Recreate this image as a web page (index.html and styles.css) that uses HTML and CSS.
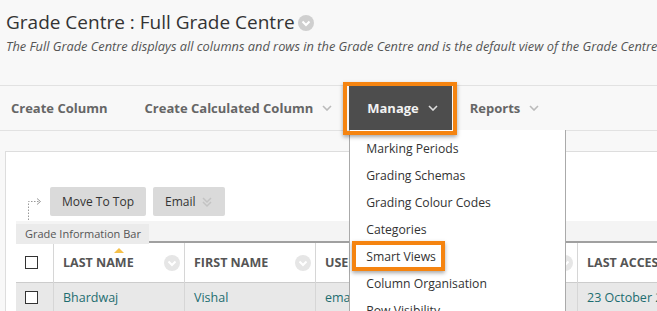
FILE: index.html
```html
<!DOCTYPE html>
<html lang="en">
<head>
    <meta charset="UTF-8">
    <title>Full Grade Centre</title>
    <link rel="stylesheet" href="styles.css">
</head>
<body>
    <div class="page-head">
        <h1>Grade Centre : Full Grade Centre
            <span class="round-chev title-chev"><svg viewBox="0 0 16 16"><path d="M4.5 6.5 8 10l3.5-3.5" /></svg></span>
        </h1>
        <p class="subtitle">The Full Grade Centre displays all columns and rows in the Grade Centre and is the default view of the Grade Centre.</p>
    </div>

    <nav class="actionbar">
        <div class="nav-item first">Create Column</div>
        <div class="nav-item calc">Create Calculated Column <svg class="chev" viewBox="0 0 10 6"><path d="M1 1l4 4 4-4" /></svg></div>
        <div class="nav-item active">Manage <svg class="chev" viewBox="0 0 10 6"><path d="M1 1l4 4 4-4" /></svg>
            <span class="callout callout-manage"></span>
            <ul class="dropdown">
                <li>Marking Periods</li>
                <li>Grading Schemas</li>
                <li>Grading Colour Codes</li>
                <li>Categories</li>
                <li class="highlighted">Smart Views <span class="callout callout-item"></span></li>
                <li>Column Organisation</li>
                <li>Row Visibility</li>
            </ul>
        </div>
        <div class="nav-item">Reports <svg class="chev" viewBox="0 0 10 6"><path d="M1 1l4 4 4-4" /></svg></div>
    </nav>

    <div class="panel">
        <div class="toolbar">
            <svg class="move-arrow" viewBox="0 0 20 24"><path d="M2.5 23V4.5H14" /><path d="M11 1.5l3.5 3-3.5 3" /></svg>
            <button class="tbtn">Move To Top</button>
            <button class="tbtn">Email <svg class="dbl-chev" viewBox="0 0 12 12"><path d="M2 2l4 4 4-4M2 6l4 4 4-4" /></svg></button>
        </div>
        <div class="infobar"><span class="infotab">Grade Information Bar</span></div>
        <table class="grid">
            <tr class="head">
                <th class="cb"><span class="box"></span></th>
                <th class="c-last"><span class="sort-arrow"></span>LAST NAME<span class="round-chev col-chev"><svg viewBox="0 0 16 16"><path d="M4.5 6.5 8 10l3.5-3.5" /></svg></span></th>
                <th class="c-first">FIRST NAME<span class="round-chev col-chev"><svg viewBox="0 0 16 16"><path d="M4.5 6.5 8 10l3.5-3.5" /></svg></span></th>
                <th class="c-user">USERNAME<span class="round-chev col-chev"><svg viewBox="0 0 16 16"><path d="M4.5 6.5 8 10l3.5-3.5" /></svg></span></th>
                <th class="c-access">LAST ACCESSED</th>
            </tr>
            <tr class="row">
                <td class="cb"><span class="box"></span></td>
                <td>Bhardwaj</td>
                <td>Vishal</td>
                <td>email@example.com</td>
                <td>23 October 2017</td>
            </tr>
        </table>
    </div>
</body>
</html>
```

FILE: styles.css
```css
html, body {
    margin: 0;
    padding: 0;
    overflow: hidden;
}

body {
    font-family: 'Open Sans', 'Noto Sans', sans-serif;
    background-color: #f8f8f8;
    color: #333;
    width: 657px;
    height: 311px;
}

/* page title */
.page-head {
    padding: 8px 0 0 6px;
    height: 85px;
    box-sizing: border-box;
}

h1 {
    margin: 0;
    font-size: 19px;
    font-weight: normal;
    line-height: 28px;
    color: #333;
    white-space: nowrap;
    display: flex;
    align-items: center;
}

.subtitle {
    margin: 2px 0 0 0;
    font-size: 12.8px;
    line-height: 17px;
    font-style: italic;
    color: #555;
    white-space: nowrap;
}

.round-chev {
    display: inline-flex;
    width: 16px;
    height: 16px;
    border-radius: 50%;
    background-color: #cfcfcf;
}

.round-chev svg {
    width: 16px;
    height: 16px;
    fill: none;
    stroke: #fff;
    stroke-width: 2;
}

.title-chev {
    margin-left: 3px;
    margin-top: 2px;
}

/* action bar */
.actionbar {
    display: flex;
    height: 44px;
    border-top: 1px solid #e2e2e2;
    border-bottom: 1px solid #e2e2e2;
    white-space: nowrap;
}

.nav-item {
    position: relative;
    display: flex;
    align-items: center;
    padding: 0 18px;
    font-size: 13px;
    font-weight: bold;
    color: #666;
}

.nav-item.first {
    padding-left: 11px;
    padding-right: 19px;
}

.nav-item.calc {
    padding-right: 17px;
}

.chev {
    width: 10px;
    height: 6px;
    margin-left: 9px;
    fill: none;
    stroke: #bbb;
    stroke-width: 1.6;
}

.nav-item.active {
    background-color: #4d4d4d;
    color: #f2f2f2;
    padding-right: 14px;
}

.nav-item.active .chev {
    stroke: #ddd;
}

.callout {
    position: absolute;
    border: 4px solid #f58410;
    box-shadow: 0 2px 4px rgba(0, 0, 0, 0.35);
    pointer-events: none;
}

.callout-manage {
    left: -6px;
    right: -5px;
    top: -4px;
    bottom: -5px;
    z-index: 3;
}

.dropdown {
    position: absolute;
    left: 0;
    top: 44px;
    width: 215px;
    margin: 0;
    padding: 5px 0 0 0;
    list-style: none;
    background-color: #fff;
    border: 1px solid #aaa;
    border-top: none;
    z-index: 2;
}

.dropdown li {
    position: relative;
    padding-left: 16px;
    font-size: 12.2px;
    font-weight: normal;
    color: #333;
    line-height: 27px;
}

.callout-item {
    left: 2px;
    top: -2px;
    width: 85px;
    height: 22px;
}

/* grade panel */
.panel {
    margin: 20px 0 0 5px;
    border: 1px solid #ddd;
    border-right: none;
    background-color: #fff;
    padding: 35px 0 0 10px;
    height: 200px;
}

.toolbar {
    display: flex;
    gap: 7px;
    padding-left: 34px;
    position: relative;
    height: 29px;
}

.move-arrow {
    position: absolute;
    left: 10px;
    top: 10px;
    width: 20px;
    height: 24px;
    fill: none;
    stroke: #999;
    stroke-width: 1;
    stroke-dasharray: 1.5 1.5;
}

.move-arrow path + path {
    stroke-dasharray: none;
}

.tbtn {
    font-family: inherit;
    font-size: 12px;
    color: #333;
    background-color: #dadada;
    border: none;
    border-radius: 2px;
    padding: 0 12px;
    display: flex;
    align-items: center;
}

.dbl-chev {
    width: 12px;
    height: 12px;
    margin-left: 5px;
    fill: none;
    stroke: #c3c3c3;
    stroke-width: 1.5;
}

.infobar {
    margin-top: 5px;
    height: 20px;
    background-color: #f4f4f4;
    border-bottom: 2px solid #a0a0a0;
}

.infotab {
    display: inline-block;
    height: 20px;
    line-height: 20px;
    padding: 0 8px 0 9px;
    background-color: #ebebeb;
    font-size: 11px;
    color: #555;
}

.grid {
    border-collapse: collapse;
    white-space: nowrap;
    table-layout: fixed;
    width: 680px;
}

.grid th, .grid td {
    border-left: 1px solid #d6d6d6;
    text-align: left;
    padding: 0 0 0 9px;
    overflow: hidden;
}

.grid tr > :first-child {
    border-left: none;
}

.head {
    height: 39px;
    border-bottom: 1px solid #ccc;
}

.head th {
    position: relative;
    font-size: 12.5px;
    font-weight: bold;
    color: #555;
}

.row {
    height: 30px;
    background-color: #e8e8e8;
}

.row td {
    font-size: 12.5px;
    color: #1d6d70;
}

.grid .cb {
    width: 28px;
}

.c-last, .c-first {
    width: 121px;
}

.c-user {
    width: 252px;
}

.box {
    display: block;
    width: 11px;
    height: 11px;
    border: 1px solid #333;
    background-color: #fff;
}

.col-chev {
    position: absolute;
    right: 4px;
    top: 12px;
    background-color: #e6e6e6;
}

.sort-arrow {
    position: absolute;
    left: 60px;
    top: 5px;
    border-left: 5px solid transparent;
    border-right: 5px solid transparent;
    border-bottom: 5px solid #f5c04a;
}
```
